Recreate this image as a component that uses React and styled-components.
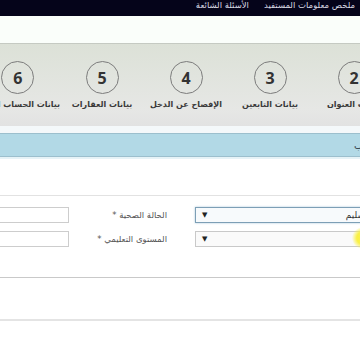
import React from "react";
import styled, { createGlobalStyle } from "styled-components";

const GlobalStyle = createGlobalStyle`
  html, body { margin: 0; padding: 0; background: #fff; }
  body { font-family: "DejaVu Sans", sans-serif; }
  #root { width: 360px; height: 360px; overflow: hidden; }
`;

const Page = styled.div`
  position: relative;
  width: 360px;
  height: 360px;
  overflow: hidden;
  direction: rtl;
  background: #fff;
`;

const TopBar = styled.div`
  height: 16px;
  background: #05041a;
  display: flex;
  align-items: flex-start;
  gap: 15px;
  padding-right: 5px;
`;

const NavLink = styled.span`
  color: #d9d9e3;
  font-size: 8.5px;
  line-height: 11px;
  white-space: nowrap;
`;

const SubHeader = styled.div`
  height: 27px;
  background: #fafefa;
  border-bottom: 1px solid #c5cac2;
`;

const StepsSection = styled.div`
  height: 82px;
  background: linear-gradient(#dce1d7, #e6e7e5 80%, #e2e2e2);
  overflow: hidden;
`;

const StepsRow = styled.div`
  display: flex;
  margin-right: -120px;
  padding-top: 17px;
`;

const Step = styled.div`
  flex: 0 0 84px;
  display: flex;
  flex-direction: column;
  align-items: center;
`;

const Circle = styled.div`
  width: 33px;
  height: 33px;
  box-sizing: border-box;
  border: 1.5px solid #7c7c7c;
  border-radius: 50%;
  display: flex;
  align-items: center;
  justify-content: center;
  font: 700 16px "Open Sans", sans-serif;
  color: #333;
`;

const StepLabel = styled.div`
  margin-top: 6px;
  font-size: 8px;
  font-weight: 600;
  color: #3a3a3a;
  white-space: nowrap;
`;

const PanelGap = styled.div`
  height: 7px;
  background: #f4f8fa;
`;

const HeadingBar = styled.div`
  height: 22px;
  background: #b2d9e6;
  border-top: 1px solid #9cbfcd;
  border-bottom: 1px solid #9cbfcd;
  box-shadow: 0 2px 0 #e6f3f7;
  direction: ltr;
  padding-left: 354px;
  white-space: nowrap;
  overflow: hidden;
  display: flex;
  align-items: center;
`;

const HeadingTitle = styled.span`
  direction: rtl;
  font-size: 10px;
  color: #3a4a55;
`;

const Divider = styled.div`
  margin-top: ${(p) => p.$top}px;
  border-top: ${(p) => p.$weight}px solid ${(p) => p.$color};
`;

const FormRows = styled.div`
  padding-top: 11px;
  display: flex;
  flex-direction: column;
  gap: 8px;
`;

const FormRow = styled.div`
  display: flex;
  align-items: center;
  margin-right: -20px;
  height: 16px;
`;

const SelectBox = styled.div`
  flex: 0 0 185px;
  height: 16px;
  box-sizing: border-box;
  border: 1px solid ${(p) => (p.$focused ? "#7d9fb6" : "#c9c9c9")};
  background: ${(p) => (p.$focused ? "#f7fafc" : "#fafafa")};
  box-shadow: ${(p) => (p.$focused ? "0 0 2px #a9c6d8" : "none")};
  display: flex;
  justify-content: space-between;
  align-items: center;
  padding: 0 14px 0 6px;
`;

const SelectValue = styled.span`
  font-size: 9px;
  color: #333;
`;

const Arrow = styled.span`
  font-size: 7px;
  color: #222;
`;

const LabelCell = styled.div`
  flex: 0 0 98px;
  margin-right: 28px;
  font-size: 8.5px;
  color: #555;
  white-space: nowrap;
`;

const InputBox = styled.div`
  flex: 0 0 90px;
  height: 16px;
  box-sizing: border-box;
  border: 1px solid #cdcdcd;
  background: #fff;
`;

const CursorGlow = styled.div`
  position: absolute;
  left: 352px;
  top: 227px;
  width: 22px;
  height: 22px;
  border-radius: 50%;
  background: radial-gradient(circle, rgba(250, 240, 60, 0.95) 40%, rgba(250, 245, 90, 0) 72%);
`;

const steps = [
  "البيانات الشخصية",
  "بيانات العنوان",
  "بيانات التابعين",
  "الإفصاح عن الدخل",
  "بيانات العقارات",
  "بيانات الحساب البنكي",
  "الإقرار",
];

const fields = [
  { label: "الحالة الصحية *", value: "سليم", focused: true },
  { label: "المستوى التعليمي *", value: "", focused: false },
];

export default function App() {
  return (
    <Page>
      <GlobalStyle />
      <TopBar>
        <NavLink>ملخص معلومات المستفيد</NavLink>
        <NavLink>الأسئلة الشائعة</NavLink>
      </TopBar>
      <SubHeader />
      <StepsSection>
        <StepsRow>
          {steps.map((s, i) => (
            <Step key={s}>
              <Circle>{i + 1}</Circle>
              <StepLabel>{s}</StepLabel>
            </Step>
          ))}
        </StepsRow>
      </StepsSection>
      <PanelGap />
      <HeadingBar>
        <HeadingTitle>بيانات الطلب</HeadingTitle>
      </HeadingBar>
      <Divider $top={38} $weight={1} $color="#e2e2e2" />
      <FormRows>
        {fields.map((f) => (
          <FormRow key={f.label}>
            <SelectBox $focused={f.focused}>
              <SelectValue>{f.value}</SelectValue>
              <Arrow>▼</Arrow>
            </SelectBox>
            <LabelCell>{f.label}</LabelCell>
            <InputBox />
          </FormRow>
        ))}
      </FormRows>
      <Divider $top={30} $weight={1} $color="#c9c9c9" />
      <Divider $top={41} $weight={2} $color="#e4e4e4" />
      <CursorGlow />
    </Page>
  );
}
